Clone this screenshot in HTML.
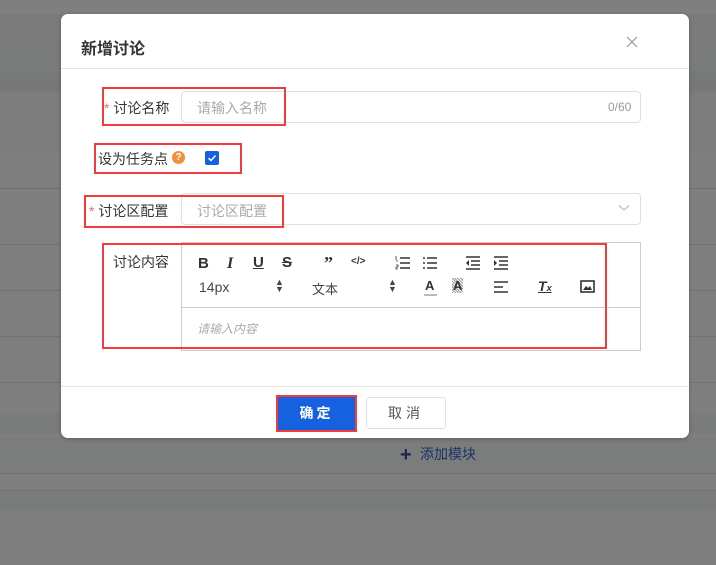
<!DOCTYPE html>
<html><head><meta charset="utf-8"><style>
*{margin:0;padding:0;box-sizing:border-box}
body{width:716px;height:565px;overflow:hidden;background:#7f7f7f;font-family:"Liberation Sans","Noto Sans CJK SC",sans-serif;position:relative}
.a{position:absolute}
.band{position:absolute;left:0;width:716px}
.dlg{left:61px;top:14px;width:628px;height:424px;background:#fff;border-radius:7px;box-shadow:0 1px 4px rgba(0,0,0,.25)}
.red{position:absolute;border:2px solid #f23b3b}
.inp{position:absolute;border:1px solid #dcdfe6;border-radius:4px;background:#fff}
.lbl{font-size:14px;color:#333;position:absolute;white-space:nowrap}
.ph{font-size:14px;color:#aaa;position:absolute;white-space:nowrap}
.tb{position:absolute;font-size:14px;color:#333;font-weight:bold}
</style></head><body>
<div class="band" style="top:0;height:14px;background:#7f7f7f"></div>
<div class="band" style="top:14px;height:24px;background:#7b7b7b"></div>
<div class="band" style="top:38px;height:35px;background:#7a7b7b"></div>
<div class="band" style="top:73px;height:19px;background:#777878"></div>
<div class="band" style="top:92px;height:60px;background:#7d7d7d"></div>
<div class="band" style="top:188px;height:1px;background:#707070"></div>
<div class="band" style="top:244px;height:1px;background:#727272"></div>
<div class="band" style="top:290px;height:1px;background:#727272"></div>
<div class="band" style="top:336px;height:1px;background:#727272"></div>
<div class="band" style="top:382px;height:1px;background:#727272"></div>
<div class="band" style="top:413px;height:20px;background:#7a7b7b"></div>
<div class="band" style="top:437px;height:36px;background:#7b7c7c"></div>
<div class="band" style="top:473px;height:1px;background:#707070"></div>
<div class="band" style="top:490px;height:1px;background:#727272"></div>
<div class="band" style="top:491px;height:20px;background:#7a7b7b"></div>
<div class="a" style="left:400px;top:444px;font-size:15px;color:#15294a"><span style="font-size:20px;font-weight:bold;vertical-align:-2px">+</span>&nbsp; <span style="font-size:14px;color:#1a3466">添加模块</span></div>

<div class="a dlg"></div>
<div class="a" style="left:81px;top:35px;font-size:16px;color:#333;font-weight:bold">新增讨论</div>
<svg class="a" style="left:626px;top:36px" width="12" height="12"><path d="M1 1L11 11M11 1L1 11" stroke="#999" stroke-width="1.2"/></svg>
<div class="a" style="left:61px;top:68px;width:628px;height:1px;background:#e4e4e4"></div>

<div class="inp" style="left:181px;top:91px;width:460px;height:32px"></div>
<div class="ph" style="left:197px;top:98px">请输入名称</div>
<div class="a" style="left:608px;top:100px;font-size:12px;color:#999;line-height:14px">0/60</div>
<div class="lbl" style="left:104px;top:98px"><span style="color:#f56c6c">*</span> 讨论名称</div>
<div class="red" style="left:102px;top:87px;width:184px;height:39px"></div>

<div class="lbl" style="left:98px;top:149px">设为任务点</div>
<div class="a" style="left:172px;top:151px;width:13px;height:13px;border-radius:50%;background:#f0913a;color:#fff;font-size:10px;text-align:center;line-height:13px;font-weight:bold">?</div>
<div class="a" style="left:205px;top:151px;width:14px;height:14px;background:#1661e0;border-radius:2px"></div>
<svg class="a" style="left:205px;top:151px" width="14" height="14"><path d="M3.5 7.2L6 9.5L10.5 4.5" stroke="#fff" stroke-width="1.4" fill="none"/></svg>
<div class="red" style="left:94px;top:143px;width:148px;height:31px"></div>

<div class="inp" style="left:181px;top:193px;width:460px;height:32px"></div>
<div class="ph" style="left:197px;top:201px">讨论区配置</div>
<svg class="a" style="left:618px;top:204px" width="12" height="8"><path d="M1 1.5L6 6L11 1.5" stroke="#bbb" stroke-width="1.2" fill="none"/></svg>
<div class="lbl" style="left:89px;top:201px"><span style="color:#f56c6c">*</span> 讨论区配置</div>
<div class="red" style="left:84px;top:195px;width:200px;height:33px"></div>

<div class="lbl" style="left:113px;top:252px">讨论内容</div>
<div class="a" style="left:181px;top:242px;width:460px;height:109px;border:1px solid #ccc"></div>
<div class="a" style="left:181px;top:307px;width:460px;height:1px;background:#ccc"></div>
<div class="tb" style="left:198px;top:255px;font-size:15px">B</div>
<div class="tb" style="left:227px;top:255px;font-style:italic;font-family:'Liberation Serif',serif;font-size:16px">I</div>
<div class="tb" style="left:253px;top:254px;text-decoration:underline;font-size:15px">U</div>
<div class="tb" style="left:282px;top:254px;text-decoration:line-through;font-size:15px">S</div>
<div class="tb" style="left:324px;top:253px;font-size:18px;font-family:'Liberation Serif',serif">”</div>
<div class="tb" style="left:351px;top:256px;font-size:10px">&lt;/&gt;</div>
<svg class="a" style="left:395px;top:255px" width="16" height="16"><path d="M5 3H15M5 8H15M5 13H15" stroke="#333" stroke-width="1.6"/><path d="M1 1v4M1 6h2M1 10h2v2H1v2h2" stroke="#333" stroke-width=".8" fill="none"/></svg>
<svg class="a" style="left:422px;top:255px" width="16" height="16"><path d="M5 3H15M5 8H15M5 13H15M1 3H3M1 8H3M1 13H3" stroke="#333" stroke-width="1.6"/></svg>
<svg class="a" style="left:465px;top:255px" width="16" height="16"><path d="M1 2H15M6 6H15M6 10H15M1 14H15" stroke="#333" stroke-width="1.6"/><path d="M4 5L1 8L4 11Z" fill="#333"/></svg>
<svg class="a" style="left:493px;top:255px" width="16" height="16"><path d="M1 2H15M6 6H15M6 10H15M1 14H15" stroke="#333" stroke-width="1.6"/><path d="M1 5L4 8L1 11Z" fill="#333"/></svg>
<div class="a" style="left:199px;top:279px;font-size:14px;color:#444">14px</div>
<div class="a" style="left:275px;top:279px;font-size:9px;color:#444;line-height:7px">▲<br>▼</div>
<div class="a" style="left:312px;top:279px;font-size:13px;color:#444">文本</div>
<div class="a" style="left:388px;top:279px;font-size:9px;color:#444;line-height:7px">▲<br>▼</div>
<div class="tb" style="left:425px;top:278px;font-size:13px">A</div>
<div class="a" style="left:424px;top:294px;width:13px;height:2px;background:#bbb"></div>
<div class="tb" style="left:452px;top:278px;font-size:13px;background:repeating-linear-gradient(45deg,#999 0 1px,#fff 1px 2px);padding:0 1px">A</div>
<svg class="a" style="left:493px;top:280px" width="16" height="14"><path d="M1 2H15M1 7H10M1 12H15" stroke="#333" stroke-width="1.6"/></svg>
<div class="tb" style="left:538px;top:278px;font-style:italic;text-decoration:underline;font-size:14px">T<span style="font-size:9px">x</span></div>
<svg class="a" style="left:580px;top:280px" width="15" height="13"><rect x="1" y="1" width="13" height="11" fill="none" stroke="#333" stroke-width="1.6"/><path d="M3 10L6 6L8 8L10 6L12 10Z" fill="#333"/></svg>
<div class="a" style="left:197px;top:320px;font-size:12px;color:#aaa;font-style:italic">请输入内容</div>
<div class="red" style="left:102px;top:243px;width:505px;height:106px"></div>

<div class="a" style="left:61px;top:386px;width:628px;height:1px;background:#e4e4e4"></div>
<div class="a" style="left:276px;top:395px;width:81px;height:37px;border:2px solid #f23b3b;background:#1661e0;color:#fff;font-size:14px;font-weight:bold;text-align:center;line-height:33px;letter-spacing:3px">确定</div>
<div class="a" style="left:366px;top:397px;width:80px;height:32px;border:1px solid #dcdfe6;border-radius:3px;background:#fff;color:#555;font-size:14px;text-align:center;line-height:30px;letter-spacing:4px">取消</div>
</body></html>
